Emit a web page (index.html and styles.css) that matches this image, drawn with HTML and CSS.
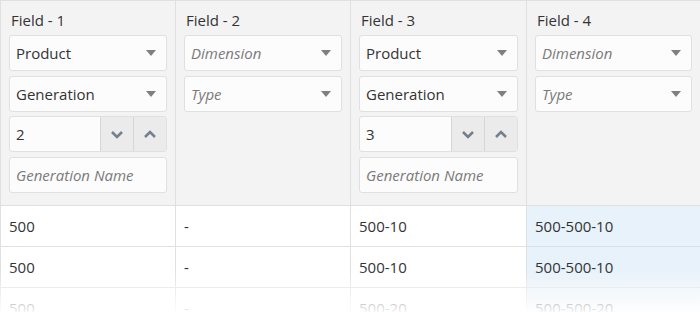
FILE: index.html
```html
<!DOCTYPE html>
<html lang="en">
<head>
    <meta charset="UTF-8">
    <meta name="viewport" content="width=device-width, initial-scale=1.0">
    <title>Field mapping</title>
    <link rel="stylesheet" href="styles.css">
</head>
<body>
    <main class="mapping">
        <table class="grid">
            <thead>
                <tr>
                    <th class="col-1">
                        <div class="field-title">Field - 1</div>
                        <div class="picker"><span>Product</span><i class="caret"></i></div>
                        <div class="picker"><span>Generation</span><i class="caret"></i></div>
                        <div class="spin">
                            <span class="spin-value">2</span>
                            <button class="spin-btn" type="button" aria-label="Decrease"><svg viewBox="0 0 14 9" width="14" height="9"><path d="M2 2 L7 7 L12 2"/></svg></button>
                            <button class="spin-btn" type="button" aria-label="Increase"><svg viewBox="0 0 14 9" width="14" height="9"><path d="M2 7 L7 2 L12 7"/></svg></button>
                        </div>
                        <div class="text-input placeholder">Generation Name</div>
                    </th>
                    <th class="col-2">
                        <div class="field-title">Field - 2</div>
                        <div class="picker placeholder"><span>Dimension</span><i class="caret"></i></div>
                        <div class="picker placeholder"><span>Type</span><i class="caret"></i></div>
                    </th>
                    <th class="col-3">
                        <div class="field-title">Field - 3</div>
                        <div class="picker"><span>Product</span><i class="caret"></i></div>
                        <div class="picker"><span>Generation</span><i class="caret"></i></div>
                        <div class="spin">
                            <span class="spin-value">3</span>
                            <button class="spin-btn" type="button" aria-label="Decrease"><svg viewBox="0 0 14 9" width="14" height="9"><path d="M2 2 L7 7 L12 2"/></svg></button>
                            <button class="spin-btn" type="button" aria-label="Increase"><svg viewBox="0 0 14 9" width="14" height="9"><path d="M2 7 L7 2 L12 7"/></svg></button>
                        </div>
                        <div class="text-input placeholder">Generation Name</div>
                    </th>
                    <th class="col-4">
                        <div class="field-title">Field - 4</div>
                        <div class="picker placeholder"><span>Dimension</span><i class="caret"></i></div>
                        <div class="picker placeholder"><span>Type</span><i class="caret"></i></div>
                    </th>
                </tr>
            </thead>
            <tbody>
                <tr>
                    <td>500</td>
                    <td>-</td>
                    <td>500-10</td>
                    <td class="result">500-500-10</td>
                </tr>
                <tr>
                    <td>500</td>
                    <td>-</td>
                    <td>500-10</td>
                    <td class="result">500-500-10</td>
                </tr>
                <tr>
                    <td>500</td>
                    <td>-</td>
                    <td>500-20</td>
                    <td class="result">500-500-20</td>
                </tr>
            </tbody>
        </table>
        <div class="fade"></div>
    </main>
</body>
</html>
```

FILE: styles.css
```css
* {
    box-sizing: border-box;
}

html,
body {
    margin: 0;
    padding: 0;
}

body {
    font-family: "Open Sans", sans-serif;
    font-size: 15px;
    color: #333;
    background: #fff;
    overflow: hidden;
}

.mapping {
    position: relative;
    height: 312px;
    overflow: hidden;
}

.grid {
    border-collapse: separate;
    border-spacing: 0;
    table-layout: fixed;
    width: 701px;
    border-left: 1px solid #e0e0e0;
    border-top: 1px solid #e0e0e0;
}

.grid th,
.grid td {
    border-right: 1px solid #e0e0e0;
    border-bottom: 1px solid #e0e0e0;
    text-align: left;
}

.col-1,
.col-2 {
    width: 175px;
}

.col-3 {
    width: 176px;
}

.col-4 {
    width: 174px;
}

.grid th {
    height: 205px;
    padding: 8px 8px 0 8px;
    vertical-align: top;
    background: #f3f3f3;
    font-weight: normal;
}

.field-title {
    height: 22px;
    line-height: 22px;
    padding-left: 2px;
    margin-bottom: 4px;
    color: #333;
}

.picker,
.spin,
.text-input {
    display: flex;
    align-items: center;
    height: 36px;
    margin-bottom: 4.5px;
    background: #fcfcfc;
    border: 1px solid #e0e0e0;
    border-radius: 3px;
}

.picker,
.text-input {
    padding: 0 10px 0 6px;
}

.picker span {
    flex: 1;
}

.placeholder {
    font-style: italic;
    color: #7a7a7a;
}

.caret {
    width: 0;
    height: 0;
    border-left: 5px solid transparent;
    border-right: 5px solid transparent;
    border-top: 6px solid #7f7f7f;
}

.spin {
    overflow: hidden;
}

.spin-value {
    flex: 1;
    padding-left: 6px;
}

.spin-btn {
    display: flex;
    align-items: center;
    justify-content: center;
    width: 33px;
    height: 100%;
    padding: 0;
    border: none;
    border-left: 1px solid #d6d6d6;
    background: #ebebeb;
    cursor: pointer;
}

.spin-btn svg {
    fill: none;
    stroke: #74808c;
    stroke-width: 2.6;
}

.grid td {
    height: 41px;
    padding: 0 8px;
    vertical-align: middle;
    background: #fff;
}

.grid td.result {
    background: #e8f2fa;
}

.fade {
    position: absolute;
    left: 0;
    right: 0;
    bottom: 0;
    height: 42px;
    background: linear-gradient(rgba(255, 255, 255, 0), rgba(255, 255, 255, 0.93));
}
```
